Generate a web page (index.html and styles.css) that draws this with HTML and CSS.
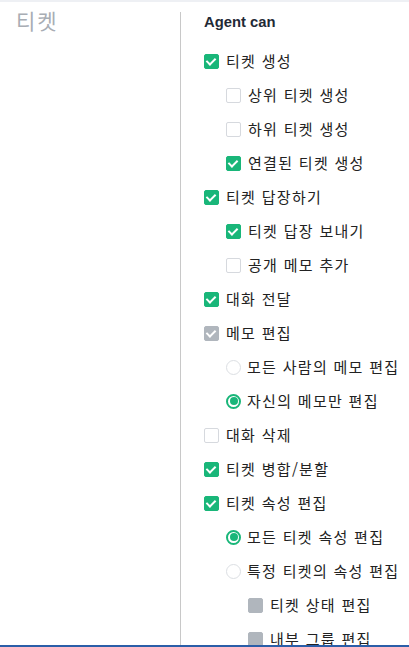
FILE: index.html
```html
<!doctype html>
<html lang="ko">
<head>
	<meta charset="UTF-8">
	<title>티켓</title>
<link rel="stylesheet" href="styles.css">
</head>
<body>
	<div class="page">
		<div class="side">
			<h2 class="title">티켓</h2>
		</div>
		<div class="perms">
			<h3 class="head">Agent can</h3>
			<ul class="list">
				<li class="row"><span class="box on"></span>티켓 생성</li>
				<li class="row lv1"><span class="box"></span>상위 티켓 생성</li>
				<li class="row lv1"><span class="box"></span>하위 티켓 생성</li>
				<li class="row lv1"><span class="box on"></span>연결된 티켓 생성</li>
				<li class="row"><span class="box on"></span>티켓 답장하기</li>
				<li class="row lv1"><span class="box on"></span>티켓 답장 보내기</li>
				<li class="row lv1"><span class="box"></span>공개 메모 추가</li>
				<li class="row"><span class="box on"></span>대화 전달</li>
				<li class="row"><span class="box on grey"></span>메모 편집</li>
				<li class="row lv1"><span class="radio"></span>모든 사람의 메모 편집</li>
				<li class="row lv1"><span class="radio on"></span>자신의 메모만 편집</li>
				<li class="row"><span class="box"></span>대화 삭제</li>
				<li class="row"><span class="box on"></span>티켓 병합/분할</li>
				<li class="row"><span class="box on"></span>티켓 속성 편집</li>
				<li class="row lv1"><span class="radio on"></span>모든 티켓 속성 편집</li>
				<li class="row lv1"><span class="radio"></span>특정 티켓의 속성 편집</li>
				<li class="row lv2"><span class="box off"></span>티켓 상태 편집</li>
				<li class="row lv2"><span class="box off"></span>내부 그룹 편집</li>
			</ul>
		</div>
	</div>
	<div class="bottom"></div>
</body>
</html>
```

FILE: styles.css
```css
html,body{
	margin: 0;
	padding: 0;
	height: 100%;
	overflow: hidden;
}
body{
	font-family: "Noto Sans CJK KR", "Liberation Sans", sans-serif;
	color: #222;
	background: #fff;
	border-top: 2px solid #eef0f4;
	box-sizing: border-box;
	position: relative;
}
.page{
	display: flex;
	height: 100%;
}
.side{
	width: 180px;
	flex: none;
}
.title{
	margin: 0;
	padding: 4px 0 0 16px;
	font-size: 21px;
	font-weight: normal;
	line-height: 28px;
	letter-spacing: 2px;
	color: #a8adb4;
}
.perms{
	margin-top: 10px;
	border-left: 1px solid #c8c8c8;
	padding-left: 23px;
	flex: 1;
}
.head{
	margin: 0;
	font-family: "Liberation Sans", sans-serif;
	font-size: 14.8px;
	font-weight: bold;
	line-height: 20px;
	color: #1f2a36;
}
.list{
	margin: 12px 0 0;
	padding: 0;
	list-style: none;
}
.row{
	display: flex;
	align-items: center;
	height: 34px;
	font-size: 15px;
	line-height: 20px;
	color: #222;
	letter-spacing: 1.3px;
}
.lv1{
	padding-left: 22px;
}
.lv2{
	padding-left: 44px;
}
.box{
	width: 13px;
	height: 13px;
	border: 1px solid #d6d9de;
	border-radius: 2px;
	margin-right: 7px;
	background: #fff;
	position: relative;
	flex: none;
}
.box.on{
	background: #19b679;
	border-color: #19b679;
}
.box.on:after{
	content: '';
	position: absolute;
	left: 3px;
	top: 1px;
	width: 4px;
	height: 7px;
	border: solid #fff;
	border-width: 0 2px 2px 0;
	transform: rotate(45deg);
}
.box.grey{
	background: #b0b6bd;
	border-color: #b0b6bd;
}
.box.off{
	background: #b0b6bd;
	border-color: #b0b6bd;
}
.radio{
	width: 13px;
	height: 13px;
	border: 1px solid #dcdfe3;
	border-radius: 50%;
	margin-right: 6px;
	background: #fff;
	position: relative;
	flex: none;
}
.radio.on{
	border: 2px solid #19b679;
	width: 11px;
	height: 11px;
}
.radio.on:after{
	content: '';
	position: absolute;
	left: 1.5px;
	top: 1.5px;
	width: 8px;
	height: 8px;
	border-radius: 50%;
	background: #19b679;
}
.bottom{
	position: absolute;
	left: 0;
	right: 0;
	bottom: 0;
	height: 2px;
	background: #2b5ea8;
}
```
